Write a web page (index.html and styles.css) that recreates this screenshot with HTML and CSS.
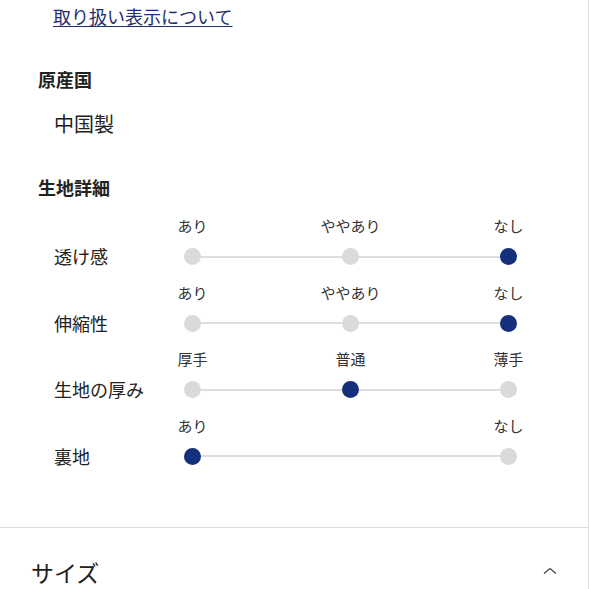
FILE: index.html
```html
<!DOCTYPE html>
<html lang="ja">
<head>
<meta charset="utf-8">
<link rel="stylesheet" href="styles.css">
</head>
<body>
<div class="page">
  <section class="detail">
    <a class="care-link" href="#">取り扱い表示について</a>
    <h3 class="heading heading-origin">原産国</h3>
    <p class="value">中国製</p>
    <h3 class="heading heading-fabric">生地詳細</h3>
    <div class="spec-list">
      <div class="spec">
        <div class="spec-name">透け感</div>
        <div class="scale-labels"><span class="pt">あり</span><span class="pt">ややあり</span><span class="pt">なし</span></div>
        <div class="scale-dots"><span class="dot"></span><span class="dot"></span><span class="dot on"></span></div>
      </div>
      <div class="spec">
        <div class="spec-name">伸縮性</div>
        <div class="scale-labels"><span class="pt">あり</span><span class="pt">ややあり</span><span class="pt">なし</span></div>
        <div class="scale-dots"><span class="dot"></span><span class="dot"></span><span class="dot on"></span></div>
      </div>
      <div class="spec">
        <div class="spec-name">生地の厚み</div>
        <div class="scale-labels"><span class="pt">厚手</span><span class="pt">普通</span><span class="pt">薄手</span></div>
        <div class="scale-dots"><span class="dot"></span><span class="dot on"></span><span class="dot"></span></div>
      </div>
      <div class="spec">
        <div class="spec-name">裏地</div>
        <div class="scale-labels"><span class="pt">あり</span><span class="pt">なし</span></div>
        <div class="scale-dots"><span class="dot on"></span><span class="dot"></span></div>
      </div>
    </div>
  </section>
  <section class="accordion">
    <h2 class="accordion-title">サイズ</h2>
    <svg class="chevron" width="14" height="8" viewBox="0 0 14 8"><path d="M1 6.5 L7 1.5 L13 6.5" fill="none" stroke="#444" stroke-width="1.3"/></svg>
  </section>
</div>
</body>
</html>
```
FILE: styles.css
```css
html, body {
  margin: 0;
  padding: 0;
  background: #fff;
}
body {
  font-family: "Noto Sans CJK JP", "Noto Sans", sans-serif;
  color: #222;
}
.page {
  width: 588px;
  height: 589px;
  border-right: 1px solid #dcdcdc;
  overflow: hidden;
}
.detail {
  padding: 3px 0 62px 38px;
  border-bottom: 1px solid #dcdcdc;
}
.care-link {
  display: inline-block;
  margin-left: 15px;
  font-size: 18px;
  line-height: 27px;
  color: #1f2f6e;
  text-decoration: underline;
  text-decoration-thickness: 1px;
  text-underline-offset: 2px;
}
.heading {
  margin: 0;
  font-size: 18px;
  line-height: 27px;
  font-weight: 700;
}
.heading-origin {
  margin-top: 35.5px;
}
.heading-fabric {
  margin-top: 34.5px;
}
.value {
  margin: 16.5px 0 0 16px;
  font-size: 20px;
  line-height: 30px;
}
.spec-list {
  margin: 15.5px 0 0 16px;
  display: flex;
  flex-direction: column;
  gap: 17.5px;
}
.spec {
  display: grid;
  grid-template-columns: 130px 333px;
  grid-template-rows: 20px 17px;
  row-gap: 12px;
}
.spec-name {
  grid-column: 1;
  grid-row: 2;
  align-self: center;
  font-size: 18px;
  line-height: 27px;
}
.scale-labels {
  grid-column: 2;
  grid-row: 1;
  display: flex;
  justify-content: space-between;
}
.pt {
  width: 17px;
  display: flex;
  flex-direction: column;
  align-items: center;
  white-space: nowrap;
  font-size: 15px;
  line-height: 20px;
  color: #333;
}
.scale-dots {
  grid-column: 2;
  grid-row: 2;
  display: flex;
  justify-content: space-between;
  align-items: center;
  background: linear-gradient(#dedede, #dedede) no-repeat center / calc(100% - 17px) 2px;
}
.dot {
  width: 17px;
  height: 17px;
  border-radius: 50%;
  background: #dadada;
}
.dot.on {
  background: #14307c;
}
.accordion {
  display: flex;
  align-items: center;
  justify-content: space-between;
  padding: 27.5px 31px 0 31px;
}
.accordion-title {
  margin: 0;
  font-size: 23px;
  line-height: 34px;
  font-weight: 400;
}
.chevron {
  display: block;
  margin-top: -2px;
}
```
